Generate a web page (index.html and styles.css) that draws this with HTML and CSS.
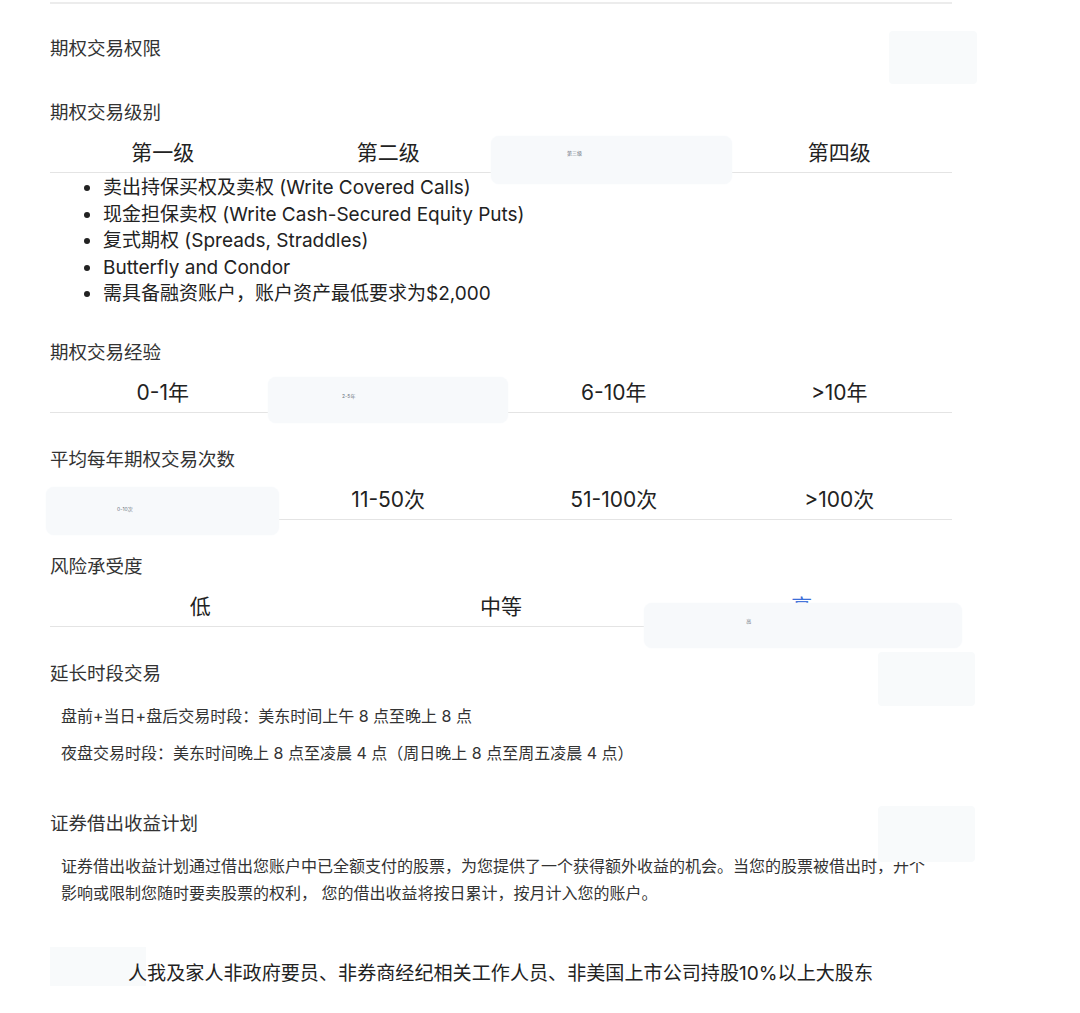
FILE: index.html
```html
<!DOCTYPE html>
<html lang="zh-CN">
<head>
    <meta charset="UTF-8">
    <meta name="viewport" content="width=device-width, initial-scale=1.0">
    <title>期权交易设置</title>
    <link rel="stylesheet" href="styles.css">
</head>
<body>
    <div class="page">
        <div class="topline"></div>

        <div class="field-row">
            <span class="label">期权交易权限</span>
            <span class="switch switch-permission"></span>
        </div>

        <div class="label title-level">期权交易级别</div>
        <div class="segments four">
            <div class="seg">第一级</div>
            <div class="seg">第二级</div>
            <div class="seg"><span class="picked picked-level">第三级</span></div>
            <div class="seg">第四级</div>
        </div>
        <ul class="level-notes">
            <li>卖出持保买权及卖权 (Write Covered Calls)</li>
            <li>现金担保卖权 (Write Cash-Secured Equity Puts)</li>
            <li>复式期权 (Spreads, Straddles)</li>
            <li>Butterfly and Condor</li>
            <li>需具备融资账户，账户资产最低要求为$2,000</li>
        </ul>

        <div class="label title-gap">期权交易经验</div>
        <div class="segments four">
            <div class="seg">0-1年</div>
            <div class="seg"><span class="picked picked-exp">2-5年</span></div>
            <div class="seg">6-10年</div>
            <div class="seg">&gt;10年</div>
        </div>

        <div class="label title-gap">平均每年期权交易次数</div>
        <div class="segments four">
            <div class="seg"><span class="picked picked-freq">0-10次</span></div>
            <div class="seg">11-50次</div>
            <div class="seg">51-100次</div>
            <div class="seg">&gt;100次</div>
        </div>

        <div class="label title-gap">风险承受度</div>
        <div class="segments three">
            <div class="seg">低</div>
            <div class="seg">中等</div>
            <div class="seg active">高<span class="picked picked-risk">高</span></div>
        </div>

        <div class="label title-gap has-switch">
            延长时段交易
            <span class="switch switch-extended"></span>
        </div>
        <p class="detail first">盘前+当日+盘后交易时段：美东时间上午 8 点至晚上 8 点</p>
        <p class="detail">夜盘交易时段：美东时间晚上 8 点至凌晨 4 点（周日晚上 8 点至周五凌晨 4 点）</p>

        <div class="label title-lending has-switch">
            证券借出收益计划
            <span class="switch switch-lending"></span>
        </div>
        <p class="lending-text">证券借出收益计划通过借出您账户中已全额支付的股票，为您提供了一个获得额外收益的机会。当您的股票被借出时，开个影响或限制您随时要卖股票的权利， 您的借出收益将按日累计，按月计入您的账户。</p>

        <div class="declare">
            <span class="check"></span>
            <span class="declare-text">人我及家人非政府要员、非券商经纪相关工作人员、非美国上市公司持股10%以上大股东</span>
        </div>
    </div>
</body>
</html>
```

FILE: styles.css
```css
body {
    margin: 0;
    background-color: #ffffff;
    font-family: Inter, "Noto Sans CJK SC", sans-serif;
    color: #222222;
}

.page {
    width: 902px;
    margin-left: 50px;
    padding-top: 2px;
}

.topline {
    border-top: 2px solid #ececec;
}

.field-row {
    position: relative;
    display: flex;
    align-items: center;
    height: 88px;
}

.label {
    font-size: 18.5px;
    line-height: 26px;
    color: #333333;
}

.title-level {
    margin-top: 7px;
}

.title-gap {
    margin-top: 33px;
}

.level-notes + .title-gap {
    margin-top: 31.5px;
}

.title-lending {
    margin-top: 46px;
}

.has-switch {
    position: relative;
}

/* empty toggle placeholders on the right */
.switch {
    position: absolute;
    background-color: #f8fafb;
    border-radius: 4px;
}

.switch-permission {
    top: 27px;
    left: 839px;
    width: 88px;
    height: 53px;
}

.switch-extended {
    top: -8px;
    left: 828px;
    width: 97px;
    height: 54px;
}

.switch-lending {
    top: -4px;
    left: 828px;
    width: 97px;
    height: 56px;
}

/* segmented option rows */
.segments {
    display: grid;
    border-bottom: 1px solid #e4e4e4;
}

.segments.four {
    grid-template-columns: repeat(4, 1fr);
}

.segments.three {
    grid-template-columns: repeat(3, 1fr);
}

.seg {
    position: relative;
    padding: 13px 0 4px;
    font-size: 21px;
    line-height: 30px;
    text-align: center;
    color: #222222;
}

.seg.active {
    color: #3b6ed8;
}

.picked {
    position: absolute;
    box-sizing: border-box;
    background-color: #f7f9fb;
    border-radius: 8px;
    font-size: 5px;
    line-height: 6px;
    color: #6b7480;
    text-align: left;
    box-shadow: 0 0 2px #f7f9fb;
}

.picked-level {
    top: 11px;
    left: -10px;
    width: 241px;
    height: 48px;
    padding: 14px 0 0 76px;
}

.picked-exp {
    top: 12px;
    left: -7.5px;
    width: 240px;
    height: 46px;
    padding: 16px 0 0 74px;
}

.picked-freq {
    top: 15px;
    left: -4px;
    width: 233px;
    height: 48px;
    padding: 19px 0 0 71px;
}

.picked-risk {
    top: 24px;
    left: -7px;
    width: 318px;
    height: 45px;
    padding: 15px 0 0 102px;
}

.level-notes {
    margin: 0;
    padding: 2px 0 0 53px;
}

.level-notes li {
    font-size: 19px;
    line-height: 26.5px;
    color: #222222;
}

.detail {
    margin: 15px 0 0;
    padding-left: 11px;
    font-size: 16px;
    line-height: 22px;
    color: #333333;
}

.detail.first {
    margin-top: 19px;
}

.lending-text {
    width: 872px;
    margin: 17px 0 0;
    padding-left: 11px;
    font-size: 16px;
    line-height: 27px;
    color: #333333;
}

.declare {
    position: relative;
    margin-top: 53px;
    padding-left: 78px;
    font-size: 19.1px;
    line-height: 26px;
    color: #222222;
}

.declare-text {
    position: relative;
}

.check {
    position: absolute;
    top: -13px;
    left: 0;
    width: 96px;
    height: 56px;
    background-color: #f8fafb;
}
```
